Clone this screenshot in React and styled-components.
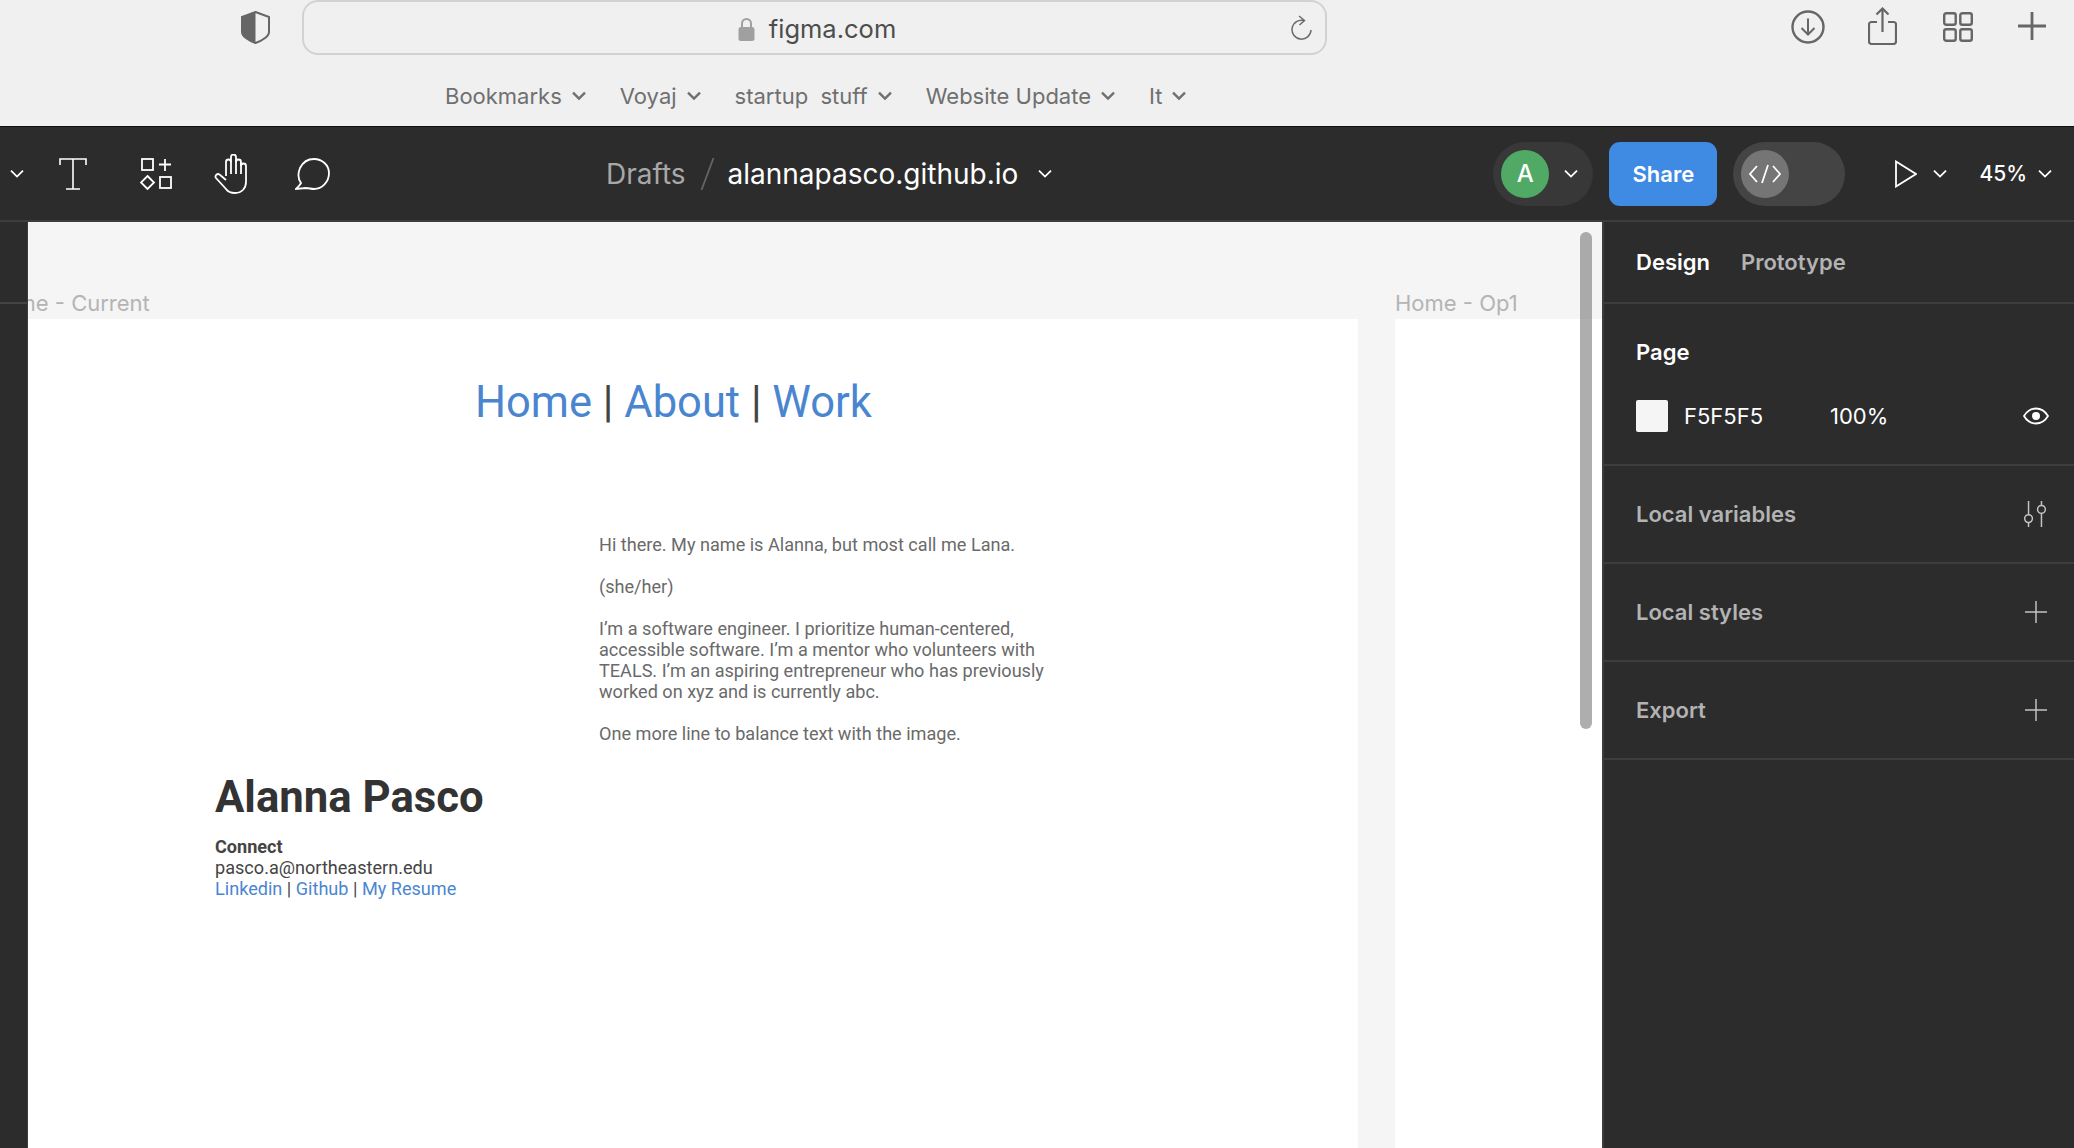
import React from 'react';
import styled, { createGlobalStyle } from 'styled-components';

const GlobalStyle = createGlobalStyle`
  html, body {
    margin: 0;
    padding: 0;
    background: #2c2c2c;
  }
  * {
    box-sizing: border-box;
  }
`;

const Page = styled.div`
  display: flex;
  flex-direction: column;
  width: 2074px;
  height: 1148px;
  overflow: hidden;
  font-family: Inter, "Liberation Sans", sans-serif;
`;

/* browser chrome */
const Browser = styled.div`
  height: 127px;
  flex: none;
  background: #f0f0f0;
  border-bottom: 1px solid #111;
`;

const BrowserTop = styled.div`
  display: flex;
  align-items: flex-start;
  height: 55px;
  padding-left: 241px;
`;

const ShieldWrap = styled.div`
  width: 29px;
  height: 33px;
  margin-top: 11px;
  margin-right: 32px;
`;

const AddressBar = styled.div`
  display: grid;
  grid-template-columns: 1fr auto 1fr;
  align-items: center;
  width: 1025px;
  height: 55px;
  padding: 0 23px 0 0;
  border: 2px solid #d2d2d2;
  border-radius: 16px;
`;

const Url = styled.div`
  grid-column: 2;
  display: flex;
  align-items: center;
  gap: 14px;
  margin: 2px 0 0 28px;
  font-size: 25.5px;
  color: #4d4d4d;
`;

const Reload = styled.div`
  grid-column: 3;
  justify-self: end;
  display: flex;
  margin-right: -11px;
`;

const BrowserActions = styled.div`
  display: flex;
  align-items: flex-start;
  margin-left: 464px;
`;

const ActionIcon = styled.div`
  display: flex;
  margin-top: ${(p) => p.$top}px;
  margin-right: ${(p) => p.$gap}px;
`;

const Bookmarks = styled.div`
  display: flex;
  align-items: center;
  height: 71px;
  padding: 11px 0 0 445px;
  gap: 34px;
`;

const Bookmark = styled.div`
  display: flex;
  align-items: center;
  gap: 10px;
  font-size: 22px;
  color: #6f6f6f;
  white-space: pre;
`;

/* figma toolbar */
const Toolbar = styled.div`
  display: flex;
  align-items: center;
  height: 95px;
  flex: none;
  background: #2c2c2c;
  border-bottom: 2px solid #3d3d3d;
`;

const ToolIcon = styled.div`
  display: flex;
  margin-left: ${(p) => p.$left}px;
`;

const Crumbs = styled.div`
  display: flex;
  align-items: center;
  margin-left: 275px;
  font-size: 28px;
`;

const CrumbMuted = styled.span`
  color: #a8a8a8;
`;

const CrumbSlash = styled.div`
  display: flex;
  margin: 0 13px 0 14px;
`;

const CrumbTitle = styled.span`
  color: #fff;
  margin-right: 20px;
`;

const Pill = styled.div`
  display: flex;
  align-items: center;
  width: ${(p) => p.$width}px;
  height: 64px;
  margin-left: ${(p) => p.$left}px;
  padding-left: 8px;
  border-radius: 32px;
  background: ${(p) => p.$bg};
`;

const Circle = styled.div`
  display: flex;
  align-items: center;
  justify-content: center;
  width: 48px;
  height: 48px;
  border-radius: 50%;
  background: ${(p) => p.$bg};
  color: #fff;
  font-size: 24px;
  font-weight: 500;
`;

const ShareButton = styled.div`
  display: flex;
  align-items: center;
  justify-content: center;
  width: 108px;
  height: 64px;
  margin-left: 16px;
  border-radius: 11px;
  background: #3f8ae2;
  color: #fff;
  font-size: 22px;
  font-weight: 600;
`;

const Zoom = styled.span`
  margin-left: 32px;
  margin-right: 11px;
  color: #fff;
  font-size: 21px;
  font-weight: 500;
`;

/* workspace */
const Workspace = styled.div`
  display: flex;
  flex: 1;
  min-height: 0;
`;

const LeftRail = styled.div`
  flex: none;
  width: 28px;
  background: #2c2c2c;
  border-right: 1px solid #3d3d3d;
`;

const RailRow = styled.div`
  height: 82px;
  border-bottom: 2px solid #444;
`;

const Canvas = styled.div`
  position: relative;
  flex: 1;
  overflow: hidden;
  background: #f5f5f5;
`;

const FrameColumn = styled.div`
  position: absolute;
  top: 65px;
  bottom: 0;
  left: ${(p) => p.$left}px;
  width: ${(p) => p.$width}px;
  display: flex;
  flex-direction: column;
`;

const FrameLabel = styled.div`
  height: 32px;
  font-size: 22px;
  line-height: 32px;
  color: #b4b4b4;
  white-space: nowrap;
`;

const Frame = styled.div`
  flex: 1;
  background: #fff;
  font-family: Roboto, "Liberation Sans", sans-serif;
`;

const Nav = styled.div`
  margin: 58px 0 0 488px;
  font-size: 43.500px;
  line-height: 52px;
  color: #444;
  white-space: pre;
`;

const Link = styled.span`
  color: #4a86d0;
`;

const Bio = styled.div`
  width: 462px;
  margin: 105px 0 0 612px;
  font-size: 18.100px;
  line-height: 21px;
  color: #6a6a6a;
`;

const BioPara = styled.p`
  margin: 0 0 21px;
  &:last-child {
    margin-bottom: 0;
  }
`;

const Name = styled.h1`
  margin: 27px 0 0 228px;
  font-size: 43.700px;
  line-height: 53px;
  font-weight: 700;
  color: #333;
`;

const Contact = styled.div`
  margin: 12px 0 0 228px;
  font-size: 18.100px;
  line-height: 21px;
  color: #444;
`;

const ContactHead = styled.div`
  font-weight: 700;
`;

const Scrollbar = styled.div`
  position: absolute;
  top: 10px;
  left: 1552px;
  width: 12px;
  height: 497px;
  border-radius: 6px;
  background: rgba(120, 120, 120, 0.6);
`;

/* right panel */
const Panel = styled.div`
  flex: none;
  width: 472px;
  background: #2c2c2c;
  border-left: 2px solid #3d3d3d;
  color: #fff;
  font-size: 22px;
  font-weight: 600;
`;

const Tabs = styled.div`
  display: flex;
  align-items: center;
  gap: 31px;
  height: 82px;
  padding-left: 32px;
  border-bottom: 2px solid #3d3d3d;
`;

const Tab = styled.span`
  color: ${(p) => (p.$active ? '#fff' : '#b3b3b3')};
`;

const PageSection = styled.div`
  height: 162px;
  padding: 30px 25px 0 32px;
  border-bottom: 2px solid #3d3d3d;
`;

const PageTitle = styled.div`
  line-height: 36px;
`;

const FillRow = styled.div`
  display: flex;
  align-items: center;
  height: 32px;
  margin-top: 30px;
  font-size: 22px;
  font-weight: 400;
`;

const Swatch = styled.div`
  width: 32px;
  height: 32px;
  border-radius: 2px;
  background: #f5f5f5;
  margin-right: 16px;
`;

const FillHex = styled.span`
  width: 146px;
`;

const FillIcon = styled.div`
  display: flex;
  margin-left: auto;
`;

const SectionRow = styled.div`
  display: flex;
  align-items: center;
  justify-content: space-between;
  height: 98px;
  padding: 0 27px 0 32px;
  border-bottom: 2px solid #3d3d3d;
  color: #b3b3b3;
`;

const Chevron = ({ color = '#fff', size = 14, width = 1.8 }) => (
  <svg width={size} height={size * 0.65} viewBox="0 0 14 9" fill="none">
    <path d="M1 1.5l6 6 6-6" stroke={color} strokeWidth={width} />
  </svg>
);

const PlusIcon = ({ color = '#c4c4c4', size = 22, width = 1.6 }) => (
  <svg width={size} height={size} viewBox="0 0 24 24" fill="none">
    <path d="M12 0v24M0 12h24" stroke={color} strokeWidth={width} />
  </svg>
);

const bookmarks = ['Bookmarks', 'Voyaj', 'startup  stuff', 'Website Update', 'It'];

const App = () => (
  <Page>
    <GlobalStyle />
    <Browser>
      <BrowserTop>
        <ShieldWrap>
          <svg width="29" height="33" viewBox="0 0 29 33">
            <path d="M14.5 1L28 6v15c0 4-6 8.500-13.500 11C7 29.500 1 25 1 21V6z" fill="none" stroke="#666" strokeWidth="2" />
            <path d="M14.500 1L1 6v15c0 4 6 8.500 13.500 11z" fill="#666" />
          </svg>
        </ShieldWrap>
        <AddressBar>
          <Url>
            <svg width="17" height="24" viewBox="0 0 17 24">
              <path d="M4 11V6.500a4.500 4.500 0 0 1 9 0V11" fill="none" stroke="#a0a0a0" strokeWidth="2" />
              <rect x="0.500" y="10" width="16" height="14" rx="2.500" fill="#a0a0a0" />
            </svg>
            figma.com
          </Url>
          <Reload>
            <svg width="22" height="26" viewBox="0 0 22 26" fill="none" stroke="#6c6c6c" strokeWidth="1.5">
              <path d="M13 5.500A9.500 9.500 0 1 0 20 15" />
              <path d="M8 1l5.500 4.500L8.500 10" />
            </svg>
          </Reload>
        </AddressBar>
        <BrowserActions>
          <ActionIcon $top={10} $gap={43}>
            <svg width="34" height="34" viewBox="0 0 34 34" fill="none" stroke="#666" strokeWidth="2.400">
              <circle cx="17" cy="17" r="15.500" />
              <path d="M17 8.500v16M10.500 18l6.500 6.500 6.500-6.500" strokeWidth="2" />
            </svg>
          </ActionIcon>
          <ActionIcon $top={7} $gap={46}>
            <svg width="29" height="38" viewBox="0 0 29 38" fill="none" stroke="#666" strokeWidth="2.200">
              <path d="M9 15H3.500A2.500 2.500 0 0 0 1 17.500v17A2.500 2.500 0 0 0 3.500 37h22a2.500 2.500 0 0 0 2.500-2.500v-17a2.500 2.500 0 0 0-2.500-2.500H20" />
              <path d="M14.500 25V2M8.500 7.500l6-6 6 6" />
            </svg>
          </ActionIcon>
          <ActionIcon $top={12} $gap={45}>
            <svg width="30" height="30" viewBox="0 0 30 30" fill="none" stroke="#666" strokeWidth="2.400">
              <rect x="1.200" y="1.200" width="11.500" height="11.500" rx="2" />
              <rect x="17.300" y="1.200" width="11.500" height="11.500" rx="2" />
              <rect x="1.200" y="17.300" width="11.500" height="11.500" rx="2" />
              <rect x="17.300" y="17.300" width="11.500" height="11.500" rx="2" />
            </svg>
          </ActionIcon>
          <ActionIcon $top={12} $gap={0}>
            <PlusIcon color="#666" size={28} width={2.400} />
          </ActionIcon>
        </BrowserActions>
      </BrowserTop>
      <Bookmarks>
        {bookmarks.map((b) => (
          <Bookmark key={b}>
            {b}
            <Chevron color="#6f6f6f" width={2.400} />
          </Bookmark>
        ))}
      </Bookmarks>
    </Browser>

    <Toolbar>
      <ToolIcon $left={10}>
        <Chevron />
      </ToolIcon>
      <ToolIcon $left={35}>
        <svg width="28" height="32" viewBox="0 0 28 32" fill="none" stroke="#fff" strokeWidth="1.600">
          <path d="M1 7V1h26v6M14 1v30M7 31h14" />
        </svg>
      </ToolIcon>
      <ToolIcon $left={53}>
        <svg width="32" height="32" viewBox="0 0 32 32" fill="none" stroke="#fff" strokeWidth="1.800">
          <rect x="2" y="1" width="11" height="11" />
          <path d="M25 1v12M19 6.500h12" />
          <path d="M7.500 18l6.500 6.500-6.500 6.500L1 24.500z" />
          <rect x="20" y="19" width="11" height="11" />
        </svg>
      </ToolIcon>
      <ToolIcon $left={42}>
        <svg width="38" height="40" viewBox="0 0 38 40" fill="none" stroke="#fff" strokeWidth="1.800">
          <path d="M12 22V8a2.500 2.500 0 0 1 5 0v-5a2.500 2.500 0 0 1 5 0v5a2.500 2.500 0 0 1 5 0v4a2.500 2.500 0 0 1 5 0v16c0 6-4 11-11 11-4 0-7-1-9-4L2 24c-1.500-2 1-5 3.500-3.500L12 26" />
          <path d="M17 7v13M22 6v14M27 8v12" />
        </svg>
      </ToolIcon>
      <ToolIcon $left={43}>
        <svg width="36" height="32" viewBox="0 0 36 32" fill="none" stroke="#fff" strokeWidth="1.800">
          <path d="M6 25C3 21 3 15 5 10 8 4 13 1 19 1c8 0 15 6 15 14 0 9-7 16-15 16-3 0-5-1-8-1l-10 1c2-2 4-4 5-6z" />
        </svg>
      </ToolIcon>
      <Crumbs>
        <CrumbMuted>Drafts</CrumbMuted>
        <CrumbSlash>
          <svg width="15" height="32" viewBox="0 0 15 32" fill="none" stroke="#666" strokeWidth="1.800">
            <path d="M13.500 0L1.500 32" />
          </svg>
        </CrumbSlash>
        <CrumbTitle>alannapasco.github.io</CrumbTitle>
        <Chevron />
      </Crumbs>
      <Pill $width={100} $left={441} $bg="#383838">
        <Circle $bg="#50a965">A</Circle>
        <ToolIcon $left={15}>
          <Chevron />
        </ToolIcon>
      </Pill>
      <ShareButton>Share</ShareButton>
      <Pill $width={112} $left={16} $bg="#444">
        <Circle $bg="#757575">
          <svg width="32" height="20" viewBox="0 0 32 20" fill="none" stroke="#fff" strokeWidth="1.800">
            <path d="M8 2L1 10l7 8M24 2l7 8-7 8M19 1l-6 18" />
          </svg>
        </Circle>
      </Pill>
      <ToolIcon $left={50}>
        <svg width="22" height="28" viewBox="0 0 22 28" fill="none" stroke="#fff" strokeWidth="1.800">
          <path d="M1 1.500v25L21 14z" />
        </svg>
      </ToolIcon>
      <ToolIcon $left={16}>
        <Chevron />
      </ToolIcon>
      <Zoom>45%</Zoom>
      <Chevron />
    </Toolbar>

    <Workspace>
      <LeftRail>
        <RailRow />
      </LeftRail>
      <Canvas>
        <FrameColumn $left={-41} $width={1371}>
          <FrameLabel>Home - Current</FrameLabel>
          <Frame>
            <Nav>
              <Link>Home</Link> | <Link>About</Link> | <Link>Work</Link>
            </Nav>
            <Bio>
              <BioPara>Hi there. My name is Alanna, but most call me Lana.</BioPara>
              <BioPara>(she/her)</BioPara>
              <BioPara>
                I’m a software engineer. I prioritize human-centered, accessible software. I’m a mentor who
                volunteers with TEALS. I’m an aspiring entrepreneur who has previously worked on xyz and is
                currently abc.
              </BioPara>
              <BioPara>One more line to balance text with the image.</BioPara>
            </Bio>
            <Name>Alanna Pasco</Name>
            <Contact>
              <ContactHead>Connect</ContactHead>
              <div>pasco.a@northeastern.edu</div>
              <div>
                <Link>Linkedin</Link> | <Link>Github</Link> | <Link>My Resume</Link>
              </div>
            </Contact>
          </Frame>
        </FrameColumn>
        <FrameColumn $left={1367} $width={300}>
          <FrameLabel>Home - Op1</FrameLabel>
          <Frame />
        </FrameColumn>
        <Scrollbar />
      </Canvas>
      <Panel>
        <Tabs>
          <Tab $active>Design</Tab>
          <Tab>Prototype</Tab>
        </Tabs>
        <PageSection>
          <PageTitle>Page</PageTitle>
          <FillRow>
            <Swatch />
            <FillHex>F5F5F5</FillHex>
            <span>100%</span>
            <FillIcon>
              <svg width="26" height="18" viewBox="0 0 26 18" fill="none" stroke="#fff" strokeWidth="1.800">
                <path d="M1 9c3-5 7-7.500 12-7.500S22 4 25 9c-3 5-7 7.500-12 7.500S4 14 1 9z" />
                <circle cx="13" cy="9" r="4" fill="#fff" stroke="none" />
              </svg>
            </FillIcon>
          </FillRow>
        </PageSection>
        <SectionRow>
          Local variables
          <svg width="24" height="28" viewBox="0 0 26 28" fill="none" stroke="#c4c4c4" strokeWidth="1.600">
            <path d="M6 0v14.500M6 23.500V28M20 0v4.500M20 13.500V28" />
            <circle cx="6" cy="19" r="4.200" />
            <circle cx="20" cy="9" r="4.200" />
          </svg>
        </SectionRow>
        <SectionRow>
          Local styles
          <PlusIcon />
        </SectionRow>
        <SectionRow>
          Export
          <PlusIcon />
        </SectionRow>
      </Panel>
    </Workspace>
  </Page>
);

export default App;
